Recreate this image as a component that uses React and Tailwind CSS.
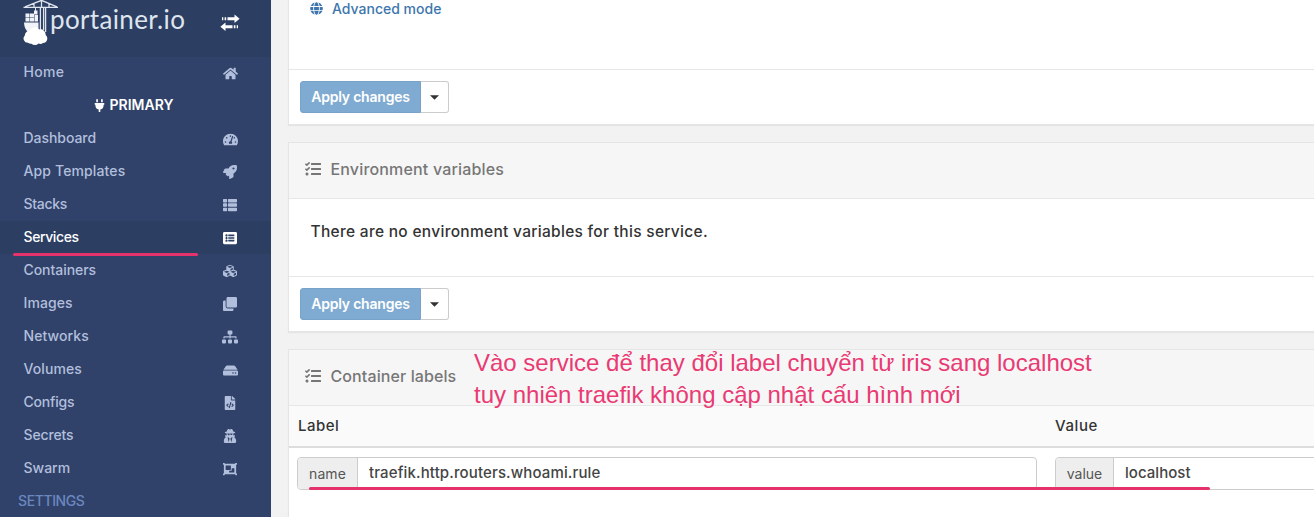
import React from "react";
import {
  FaHome, FaPlug, FaTachometerAlt, FaRocket, FaThList, FaListAlt, FaCubes, FaClone,
  FaSitemap, FaHdd, FaFileCode, FaUserSecret, FaObjectGroup, FaTasks, FaGlobe,
} from "react-icons/fa";

const items = [
  { label: "Dashboard", icon: FaTachometerAlt, size: "size-[15px]", track: "tracking-[-0.05px]" },
  { label: "App Templates", icon: FaRocket, size: "size-[14px]", track: "tracking-[0.13px]" },
  { label: "Stacks", icon: FaThList, size: "size-[14px]", track: "tracking-[-0.3px]" },
  { label: "Services", icon: FaListAlt, size: "size-[14px]", track: "tracking-[-0.4px]", active: true },
  { label: "Containers", icon: FaCubes, size: "size-[14px]", track: "tracking-[-0.05px]" },
  { label: "Images", icon: FaClone, size: "size-[14px]", track: "tracking-[0.1px]" },
  { label: "Networks", icon: FaSitemap, size: "size-[16px]", track: "tracking-[0.08px]" },
  { label: "Volumes", icon: FaHdd, size: "size-[15px]", track: "tracking-[0.1px]" },
  { label: "Configs", icon: FaFileCode, size: "size-[14px]", track: "tracking-[-0.2px]" },
  { label: "Secrets", icon: FaUserSecret, size: "size-[14px]", track: "tracking-[-0.15px]" },
  { label: "Swarm", icon: FaObjectGroup, size: "size-[14px]", track: "tracking-[0px]" },
];

function NavRow({ label, icon: Icon, size, track, active }) {
  return (
    <a className={`flex h-[33px] shrink-0 items-center justify-between pb-[2px] pl-[23.5px] pr-[31px] ${active ? "bg-[#2d3e63] text-white" : "text-[#b2bfdc]"}`}>
      <span className={`text-[14px] leading-5 font-medium ${track}`}>{label}</span>
      <span className="flex w-5 justify-center pt-[3px]"><Icon className={size} /></span>
    </a>
  );
}

function CraneLogo() {
  return (
    <svg className="h-[46px] w-[36px] shrink-0" viewBox="0 0 36 46" fill="none">
      <g stroke="#dfe5ee" strokeWidth="1.3">
        <path d="M0.5 7.3H35M2 6.8L18.5 0.3L34 6.8M11 7V3.400M26 7V3.400M18.500 0V7" />
        <path d="M17.400 7V30M20.600 7V30M22.600 7V32" />
      </g>
      <path d="M12.500 8V11" stroke="#dfe5ee" />
      <path d="M11 10.500h3.500v4H11zM2.500 13.500h4v4h-4zM7 13.500h4v4H7zM2.500 18h4v3.500h-4zM7 18h4v3.500H7zM11.500 15h3.500v6.500h-3.500z" fill="#f0f3f8" />
      <path d="M1 22.500H15.500V28.500C13 28 11 29 9 31H4C2 29 1.200 26 1 22.500z" fill="#f0f3f8" />
      <path d="M5 42.800A4.300 4.300 0 0 1 1.800 35.500 5 5 0 0 1 7 30.500 5.500 5.500 0 0 1 16.500 29.500 5 5 0 0 1 22.600 35 4.500 4.500 0 0 1 20 43 4.500 4.500 0 0 1 15.500 43.500 4.800 4.800 0 0 1 8.500 43.700 5 5 0 0 1 5 42.800z" fill="#fff" />
    </svg>
  );
}

function ToggleArrows() {
  return (
    <svg className="h-[18px] w-5" viewBox="0 0 20 18" fill="#fff">
      <path d="M2 3.200h1.300v3H2zM4.600 3.200h1.600v3H4.600zM7.500 3.200h7V.5l5.100 4.200L14.500 9V6.200H7.500zM18 11.300h-1.300v3H18zM15.400 11.300h-1.600v3h1.600zM12.500 11.300H5.500V8.600L.4 12.800 5.500 17.100V14.300h7z" />
    </svg>
  );
}

function ApplyButtons() {
  return (
    <div className="flex h-8">
      <button className="w-[121px] rounded-l-[3px] border border-[#78a2c8] bg-[#7fabd2] text-[14px] leading-5 font-semibold tracking-[-0.2px] text-white">Apply changes</button>
      <button className="flex w-7 items-center justify-center rounded-r-[3px] border border-l-0 border-[#ccc] bg-white">
        <svg className="h-[5px] w-[9px]" viewBox="0 0 8 4" fill="#333"><path d="M0 0h8L4 4z" /></svg>
      </button>
    </div>
  );
}

function Footer() {
  return <div className="flex h-[55px] shrink-0 items-start border-t border-[#e7e7e7] pt-[11px] pl-[11px]"><ApplyButtons /></div>;
}

function Header({ title, track }) {
  return (
    <div className="flex h-[56px] shrink-0 items-center border-b border-[#e7e7e7] bg-[#f6f6f6] pb-[3px] pl-4 text-[#767676]">
      <FaTasks className="size-4" />
      <span className={`pl-[9.5px] text-[16px] leading-6 font-medium ${track}`}>{title}</span>
    </div>
  );
}

const panel = "flex shrink-0 flex-col border border-r-0 border-[#e5e5e5] bg-white shadow-[0_1px_1px_rgba(0,0,0,0.05)]";

function Field({ name, value, box, addon, track, addonTrack }) {
  return (
    <div className={`flex h-[33px] shrink-0 rounded-[4px] border border-[#ccc] bg-white ${box}`}>
      <span className={`flex items-center justify-center rounded-l-[3px] border-r border-[#ccc] bg-[#eee] pb-px text-[14px] text-[#555] ${addon} ${addonTrack}`}>{name}</span>
      <span className={`flex items-center pl-[11px] text-[15px] font-medium text-[#444] ${track}`}>{value}</span>
    </div>
  );
}

export default function App() {
  return (
    <div className="relative flex h-[517px] w-[1314px] overflow-hidden bg-[#f2f2f2] font-['Inter',sans-serif]">
      <aside className="flex w-[271px] shrink-0 flex-col bg-[#30426a]">
        <div className="flex h-[57px] shrink-0 items-start justify-between bg-[#2d3e63] pl-[23px] pr-[31px]">
          <div className="flex">
            <CraneLogo />
            <span className="-ml-[9px] pt-[3px] font-['Lato',sans-serif] text-[26px] leading-[32px] font-normal tracking-[0.35px] text-[#dfe5ee]">portainer.io</span>
          </div>
          <div className="pt-[14px]"><ToggleArrows /></div>
        </div>
        <div className="h-8 shrink-0"><div className="-mt-px"><NavRow label="Home" icon={FaHome} size="size-[15px]" track="tracking-[0.3px]" /></div></div>
        <div className="flex h-[33px] shrink-0 items-center justify-center gap-1 pr-[5px] pb-px text-white">
          <FaPlug className="size-[13px]" />
          <span className="text-[14px] leading-5 font-semibold tracking-[0px]">PRIMARY</span>
        </div>
        {items.map((item) => <NavRow key={item.label} {...item} />)}
        <div className="flex h-8 shrink-0 items-center pb-px pl-[18px] text-[14px] font-medium tracking-[-0.4px] text-[#6b87c0]">SETTINGS</div>
      </aside>

      <main className="flex min-w-0 flex-1 flex-col gap-[17px] pl-[17px]">
        <section className={`${panel} h-[125px] border-t-0`}>
          <div className="flex flex-1 items-start pt-[1px] pl-[21px] text-[#3d76ad]">
            <FaGlobe className="mt-[1px] size-[13px]" />
            <span className="-mt-[2.5px] pl-[9px] text-[14px] leading-5 font-medium">Advanced mode</span>
          </div>
          <Footer />
        </section>

        <section className={`${panel} h-[190px]`}>
          <Header title="Environment variables" track="tracking-[0.17px]" />
          <div className="flex-1 pt-[21px] pl-[21.5px] text-[15.5px] leading-6 font-medium tracking-[0.3px] text-[#333]">There are no environment variables for this service.</div>
          <Footer />
        </section>

        <section className={`${panel} h-[190px]`}>
          <Header title="Container labels" track="tracking-[0.1px]" />
          <div className="flex h-[42px] shrink-0 border-b-2 border-[#ddd] bg-[#fafafa] pt-2 pl-[9px] text-[15px] leading-6 font-medium text-[#333]">
            <span className="w-[757px] tracking-[0.5px]">Label</span>
            <span className="tracking-[0.6px]">Value</span>
          </div>
          <div className="flex gap-[18px] pt-[9px] pl-2">
            <Field name="name" value="traefik.http.routers.whoami.rule" box="w-[740px]" addon="w-[60px]" track="tracking-[0.13px]" addonTrack="tracking-[0.1px]" />
            <Field name="value" value="localhost" box="w-[400px]" addon="w-[58px]" track="tracking-[0.05px]" addonTrack="tracking-[0px]" />
          </div>
        </section>
      </main>

      <div className="absolute top-[253px] left-[13px] h-[3px] w-[185px] rounded-full bg-[#e5326b]" />
      <div className="absolute top-[487px] left-[309px] h-[3px] w-[901px] rounded-full bg-[#e5326b]" />
      <p className="absolute top-[347px] left-[474px] font-['Liberation_Sans',sans-serif] text-[24px] leading-8 whitespace-nowrap text-[#e93a73]">
        <span className="block">Vào service để thay đổi label chuyển từ iris sang localhost</span>
        <span className="block">tuy nhiên traefik không cập nhật cấu hình mới</span>
      </p>
    </div>
  );
}
